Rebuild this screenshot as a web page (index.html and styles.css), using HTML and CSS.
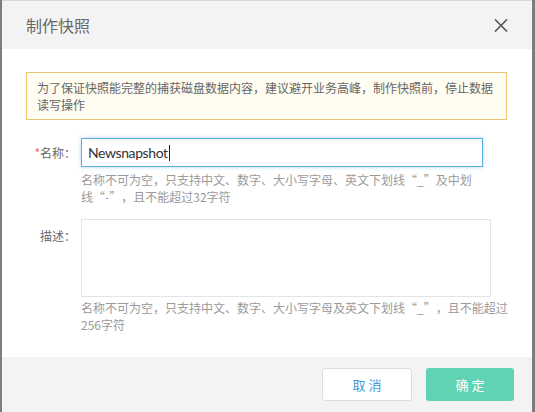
FILE: index.html
```html
<!DOCTYPE html>
<html lang="zh-CN">
<head>
<meta charset="utf-8">
<title>制作快照</title>
<link rel="stylesheet" href="styles.css">
</head>
<body>
<div class="dialog">
  <div class="dialog-header">
    <span class="dialog-title">制作快照</span>
    <svg class="close-icon" width="14" height="13" viewBox="0 0 14 13" aria-hidden="true">
      <path d="M1 0.5 L13 12.5 M13 0.5 L1 12.5" stroke="#555" stroke-width="1.6" fill="none"/>
    </svg>
  </div>
  <div class="dialog-body">
    <div class="alert">为了保证快照能完整的捕获磁盘数据内容，建议避开业务高峰，制作快照前，停止数据<br>读写操作</div>
    <div class="form-row row-name">
      <label class="form-label"><span class="req">*</span>名称：</label>
      <div class="field">
        <div class="input focused">Newsnapshot<span class="caret"></span></div>
        <div class="hint">名称不可为空，只支持中文、数字、大小写字母、英文下划线<span class="fw">“</span>_<span class="fw">”</span>及中划<br>线<span class="fw">“</span>-<span class="fw">”</span>，且不能超过32字符</div>
      </div>
    </div>
    <div class="form-row row-desc">
      <label class="form-label label-top">描述：</label>
      <div class="field">
        <div class="textarea"></div>
        <div class="hint hint-desc">名称不可为空，只支持中文、数字、大小写字母及英文下划线<span class="fw">“</span>_<span class="fw">”</span>，且不能超过<br>256字符</div>
      </div>
    </div>
  </div>
  <div class="dialog-footer">
    <button class="btn btn-cancel">取 消</button>
    <button class="btn btn-ok">确 定</button>
  </div>
</div>
</body>
</html>
```

FILE: styles.css
```css
html, body {
  margin: 0;
  padding: 0;
}
body {
  background: #7d7d7d;
  width: 535px;
  height: 412px;
  overflow: hidden;
  font-family: "Noto Sans CJK SC", "Noto Sans", sans-serif;
  text-spacing-trim: space-all;
}
.dialog {
  margin: 0 3px 0 2px;
  width: 530px;
  height: 411px;
  border-top: 1px solid #d8d8d8;
  background: #fff;
  display: flex;
  flex-direction: column;
}
.dialog-header {
  height: 48px;
  background: #f3f3f3;
  display: flex;
  align-items: center;
  justify-content: space-between;
  padding: 0 24px;
}
.dialog-title {
  font-size: 16px;
  color: #666;
}
.close-icon {
  display: block;
}
.dialog-body {
  padding: 23px 25px 24px 24px;
}
.alert {
  border: 1px solid #e8c46c;
  background: #fffcf1;
  padding: 6px 10px;
  font-size: 12px;
  line-height: 17px;
  color: #666;
  white-space: nowrap;
}
.form-row {
  display: flex;
  gap: 5px;
}
.row-name {
  margin-top: 18px;
}
.row-desc {
  margin-top: 14px;
}
.form-label {
  flex: 0 0 50px;
  width: 50px;
  text-align: right;
  font-size: 12px;
  color: #666;
  height: 29px;
  line-height: 29px;
  white-space: nowrap;
}
.label-top {
  padding-top: 2px;
}
.req {
  color: #e56a6a;
}
.field {
  display: flex;
  flex-direction: column;
  flex: 0 0 auto;
}
.input {
  width: 402px;
  height: 29px;
  box-sizing: border-box;
  border: 1px solid #5aaee0;
  box-shadow: 0 0 4px rgba(90, 174, 224, 0.45);
  padding: 0 6px;
  font-family: Lato, "Noto Sans CJK SC", sans-serif;
  font-size: 14px;
  letter-spacing: -0.4px;
  line-height: 27px;
  color: #333;
  display: flex;
  align-items: center;
}
.caret {
  display: inline-block;
  width: 1px;
  height: 16px;
  background: #222;
  margin-left: 1px;
}
.textarea {
  width: 410px;
  height: 78px;
  box-sizing: border-box;
  border: 1px solid #e4e4e4;
}
.hint {
  margin-top: 4px;
  font-size: 12px;
  line-height: 17px;
  color: #9a9a9a;
  white-space: nowrap;
}
.fw {
  font-feature-settings: "fwid";
}
.hint-desc {
  margin-top: 2px;
}
.dialog-footer {
  flex: 1;
  background: #f3f3f3;
  display: flex;
  justify-content: flex-end;
  align-items: flex-start;
  gap: 14px;
  padding: 11px 18px 0 0;
}
.btn {
  height: 33px;
  border-radius: 3px;
  font-family: "Noto Sans CJK SC", sans-serif;
  font-size: 13px;
  padding: 0;
  cursor: pointer;
}
.btn-cancel {
  width: 90px;
  background: #fff;
  border: 1px solid #dcdcdc;
  color: #3f9bd8;
}
.btn-ok {
  width: 88px;
  background: #60d3b4;
  border: none;
  color: #fff;
}
```
